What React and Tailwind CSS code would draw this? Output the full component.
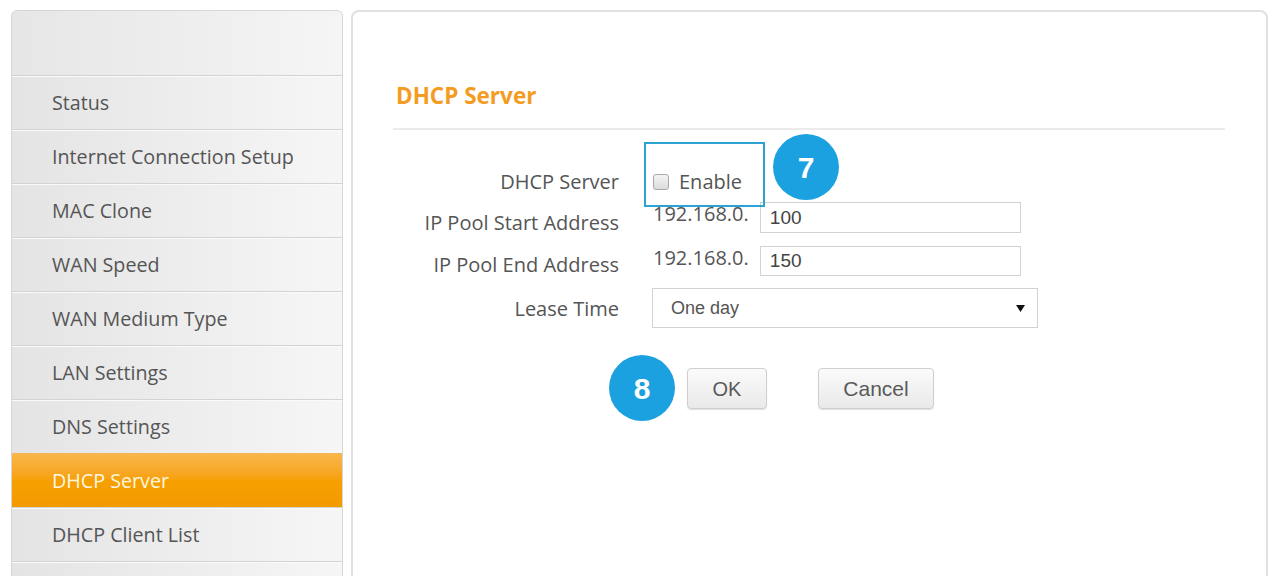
import { useState } from 'react';

const menu = [
  'Status',
  'Internet Connection Setup',
  'MAC Clone',
  'WAN Speed',
  'WAN Medium Type',
  'LAN Settings',
  'DNS Settings',
  'DHCP Server',
  'DHCP Client List',
  '',
];

const sans = "font-['Open_Sans','Liberation_Sans',sans-serif]";
const arial = "font-['Liberation_Sans',Arial,sans-serif]";

function Step({ n, className }) {
  return (
    <div className={`absolute w-[66px] h-[66px] rounded-full bg-[#1ba1e0] flex items-center justify-center text-white text-[30px] font-bold ${arial} ${className}`}>
      {n}
    </div>
  );
}

export default function App() {
  const [active, setActive] = useState('DHCP Server');
  const [enabled, setEnabled] = useState(false);
  const [start, setStart] = useState('100');
  const [end, setEnd] = useState('150');

  return (
    <div className={`w-[1273px] h-[576px] overflow-hidden bg-white flex gap-[8px] pt-[10px] pl-[11px] ${sans}`}>
      {/* side menu */}
      <div className="w-[332px] shrink-0 border border-b-0 border-[#d6d6d6] rounded-t-[6px] overflow-hidden bg-[#f0f0f0]">
        <div className="h-[64px] bg-gradient-to-r from-[#e6e6e6] to-[#f5f5f5]" />
        {menu.map((item, i) => {
          const on = item === active;
          return (
            <div
              key={i}
              onClick={() => item && setActive(item)}
              className={`h-[54px] flex items-center pl-[40px] text-[19.7px] cursor-pointer border-t ${
                on
                  ? 'bg-gradient-to-b from-[#fab648] via-[#f6a000] to-[#f39a00] text-[#fff6e0] border-[#f3b45a]'
                  : 'bg-gradient-to-r from-[#e4e4e4] to-[#f6f6f6] text-[#555] border-[#d3d3d3] shadow-[inset_0_1px_0_#fafafa]'
              }`}
            >
              {item}
            </div>
          );
        })}
      </div>

      {/* main panel */}
      <div className="w-[917px] shrink-0 border-2 border-b-0 border-[#e0e0e0] rounded-t-[8px] bg-white pt-[69px]">
        <div className="h-[30px] pl-[43px] text-[22.5px] font-bold leading-[30px] text-[#f39c1f]">DHCP Server</div>
        <div className="mt-[17px] ml-[40px] mr-[41px] h-[2px] bg-[#ebebeb]" />

        <div className="mt-[32px] text-[20px] text-[#555]">
          {/* DHCP Server */}
          <div className="flex items-center h-[40px]">
            <div className="w-[266px] text-right">DHCP Server</div>
            <div className="relative ml-[34px] flex items-center">
              <button
                onClick={() => setEnabled(!enabled)}
                className="w-[16px] h-[16px] rounded-[3px] border border-[#a9a9a9] bg-gradient-to-b from-[#f4f4f4] to-[#dcdcdc] flex items-center justify-center text-[12px] leading-none text-[#333]"
              >
                {enabled ? '✓' : ''}
              </button>
              <span className="ml-[10px]">Enable</span>
              <div className="absolute left-[-9px] top-[-25px] w-[121px] h-[65px] border-2 border-[#2da3d2]" />
              <Step n="7" className="left-[120px] top-[-33px]" />
            </div>
          </div>

          {/* pool start */}
          <div className="flex items-start h-[43px]">
            <div className="w-[266px] text-right leading-[20px] mt-[11px]">IP Pool Start Address</div>
            <div className="ml-[34px] leading-[20px] mt-[2px]">192.168.0.</div>
            <input
              value={start}
              onChange={(e) => setStart(e.target.value)}
              className={`ml-[11px] w-[261px] h-[31px] border border-[#d2d2d2] pl-[9px] text-[19px] text-[#444] outline-none ${arial}`}
            />
          </div>

          {/* pool end */}
          <div className="flex items-start h-[43px]">
            <div className="w-[266px] text-right leading-[20px] mt-[10px]">IP Pool End Address</div>
            <div className="ml-[34px] leading-[20px] mt-[3px]">192.168.0.</div>
            <input
              value={end}
              onChange={(e) => setEnd(e.target.value)}
              className={`ml-[11px] mt-[1px] w-[261px] h-[30px] border border-[#d2d2d2] pl-[9px] text-[19px] text-[#444] outline-none ${arial}`}
            />
          </div>

          {/* lease */}
          <div className="flex items-start h-[40px]">
            <div className="w-[266px] text-right leading-[20px] mt-[11px]">Lease Time</div>
            <div className={`ml-[33px] w-[386px] h-[40px] border border-[#d2d2d2] flex items-center justify-between pl-[18px] pr-[12px] text-[18px] text-[#555] ${arial}`}>
              <span>One day</span>
              <svg width="9" height="9" viewBox="0 0 10 10">
                <path d="M0 1h10L5 9z" fill="#111" />
              </svg>
            </div>
          </div>

          {/* actions */}
          <div className={`flex mt-[40px] pl-[334px] ${arial}`}>
            <div className="relative">
              <button className="w-[80px] h-[41px] rounded-[4px] border border-[#cfcfcf] bg-gradient-to-b from-[#fbfbfb] to-[#e9e9e9] shadow-[0_1px_1px_rgba(0,0,0,0.12)] text-[20px] text-[#5a5a5a]">
                OK
              </button>
              <Step n="8" className="left-[-78px] top-[-13px]" />
            </div>
            <button className="ml-[51px] w-[116px] h-[41px] rounded-[4px] border border-[#cfcfcf] bg-gradient-to-b from-[#fbfbfb] to-[#e9e9e9] shadow-[0_1px_1px_rgba(0,0,0,0.12)] text-[21px] text-[#5a5a5a]">
              Cancel
            </button>
          </div>
        </div>
      </div>
    </div>
  );
}
